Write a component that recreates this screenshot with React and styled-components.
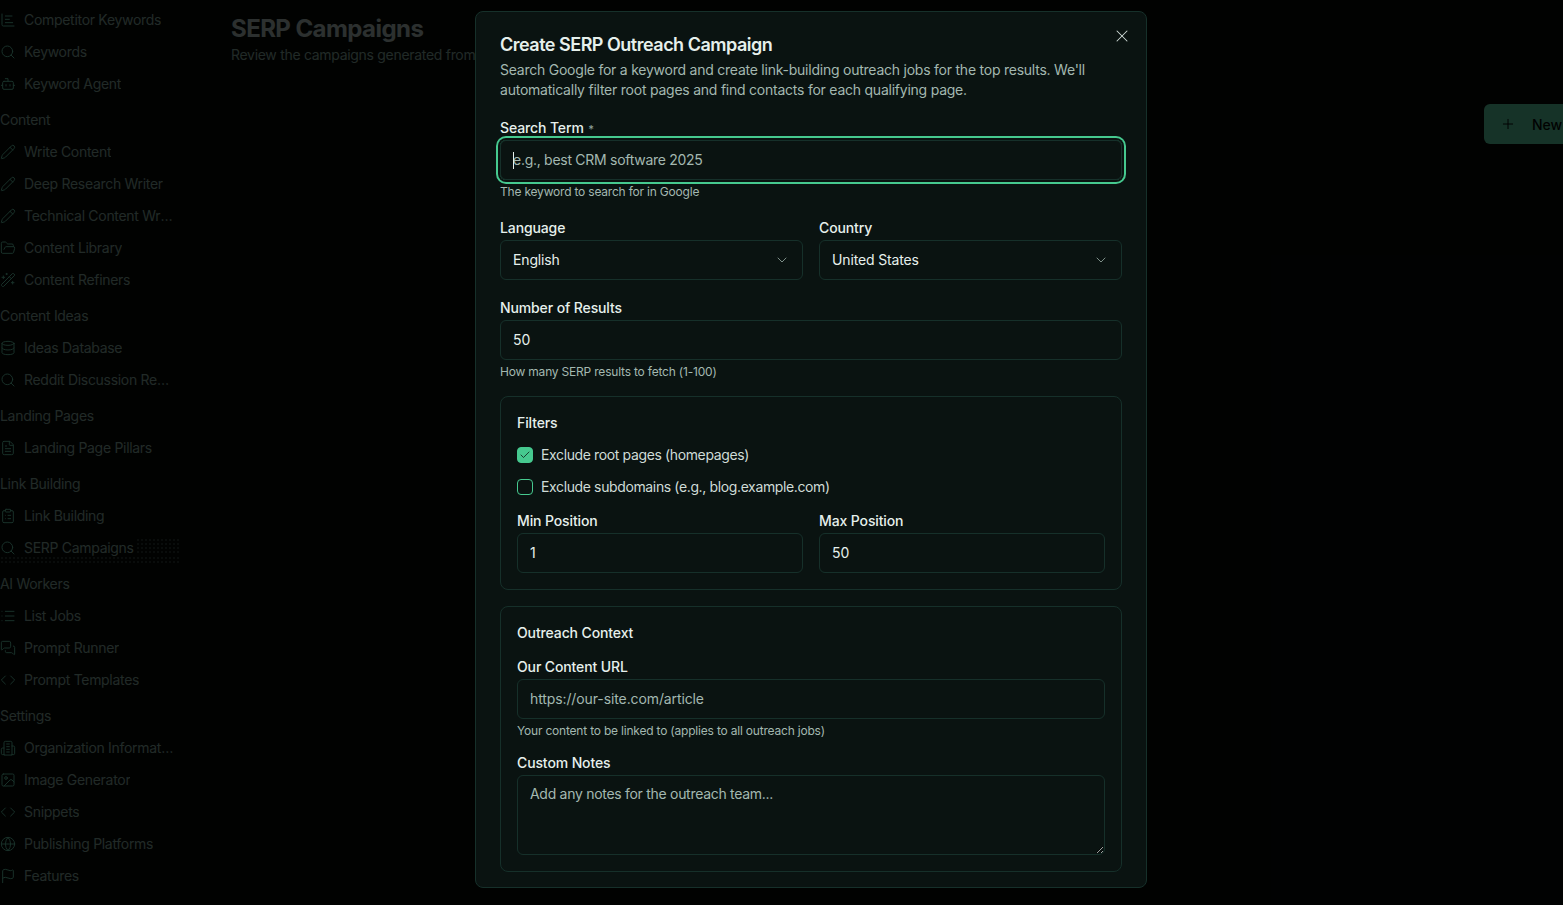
import React from 'react'
import styled, { createGlobalStyle } from 'styled-components'
import {
  Search, Bot, Pencil, FolderOpen, WandSparkles, Database, FileText,
  ClipboardList, List, MessagesSquare, Code, Image, Globe, Flag, Plus, X, ChevronDown, Check,
} from 'lucide-react'

const GlobalStyle = createGlobalStyle`
  html, body { margin: 0; padding: 0; height: 100%; background: #050a09; }
  * { box-sizing: border-box; }
  body { font-family: Inter, "Liberation Sans", sans-serif; overflow: hidden; }
`

const IconBase = ({ children }) => (
  <svg width="16" height="16" viewBox="0 0 24 24" fill="none" stroke="currentColor" strokeWidth="1.5" strokeLinecap="round" strokeLinejoin="round">
    {children}
  </svg>
)

const ChartIcon = () => (
  <IconBase>
    <path d="M3 3v16a2 2 0 0 0 2 2h16" />
    <path d="M8 6h10" />
    <path d="M8 11h6" />
    <path d="M8 16h11" />
  </IconBase>
)

const OrgIcon = () => (
  <IconBase>
    <path d="M6 22V4a2 2 0 0 1 2-2h8a2 2 0 0 1 2 2v18Z" />
    <path d="M6 12H4a2 2 0 0 0-2 2v6a2 2 0 0 0 2 2h2" />
    <path d="M18 9h2a2 2 0 0 1 2 2v9a2 2 0 0 1-2 2h-2" />
    <path d="M10 6h4" />
    <path d="M10 10h4" />
    <path d="M10 14h4" />
    <path d="M10 18h4" />
  </IconBase>
)

const nav = [
  { items: [['Competitor Keywords', ChartIcon], ['Keywords', Search], ['Keyword Agent', Bot]] },
  { title: 'Content', items: [['Write Content', Pencil], ['Deep Research Writer', Pencil], ['Technical Content Writer', Pencil], ['Content Library', FolderOpen], ['Content Refiners', WandSparkles]] },
  { title: 'Content Ideas', items: [['Ideas Database', Database], ['Reddit Discussion Research', Search]] },
  { title: 'Landing Pages', items: [['Landing Page Pillars', FileText]] },
  { title: 'Link Building', items: [['Link Building', ClipboardList], ['SERP Campaigns', Search, true]] },
  { title: 'AI Workers', items: [['List Jobs', List], ['Prompt Runner', MessagesSquare], ['Prompt Templates', Code]] },
  { title: 'Settings', items: [['Organization Information', OrgIcon], ['Image Generator', Image], ['Snippets', Code], ['Publishing Platforms', Globe], ['Features', Flag]] },
]

const App = () => (
  <Page>
    <GlobalStyle />
    <Sidebar>
      {nav.map((group, i) => (
        <NavGroup key={i}>
          {group.title && <GroupTitle>{group.title}</GroupTitle>}
          {group.items.map(([label, Icon, active]) => (
            <NavItem key={label} $active={active}>
              <Icon size={16} strokeWidth={1.5} />
              <span>{label}</span>
            </NavItem>
          ))}
        </NavGroup>
      ))}
    </Sidebar>
    <Main>
      <div>
        <PageTitle>SERP Campaigns</PageTitle>
        <PageSub>Review the campaigns generated from your keyword searches</PageSub>
      </div>
      <NewButton><Plus size={16} strokeWidth={1.5} /> New Campaign</NewButton>
    </Main>
    <Overlay />
    <Dialog>
      <CloseButton><X size={20} strokeWidth={1.25} /></CloseButton>
      <DialogTitle>Create SERP Outreach Campaign</DialogTitle>
      <DialogText>
        Search Google for a keyword and create link-building outreach jobs for the top results. We'll
        automatically filter root pages and find contacts for each qualifying page.
      </DialogText>

      <Field>
        <Label>Search Term <Required>*</Required></Label>
        <InputWrap>
          <Input $focused $tight autoFocus placeholder="e.g., best CRM software 2025" />
          <Caret />
        </InputWrap>
        <Hint>The keyword to search for in Google</Hint>
      </Field>

      <TwoCols>
        <Field>
          <Label>Language</Label>
          <Select>English <ChevronDown size={16} strokeWidth={1.5} /></Select>
        </Field>
        <Field>
          <Label>Country</Label>
          <Select>United States <ChevronDown size={16} strokeWidth={1.5} /></Select>
        </Field>
      </TwoCols>

      <Field>
        <Label>Number of Results</Label>
        <Input defaultValue="50" />
        <Hint>How many SERP results to fetch (1-100)</Hint>
      </Field>

      <Panel>
        <PanelTitle>Filters</PanelTitle>
        <CheckRow>
          <CheckBox $checked><Check size={12} strokeWidth={1.5} /></CheckBox>
          <CheckText>Exclude root pages (homepages)</CheckText>
        </CheckRow>
        <CheckRow>
          <CheckBox />
          <CheckText>Exclude subdomains (e.g., blog.example.com)</CheckText>
        </CheckRow>
        <TwoCols>
          <Field>
            <Label>Min Position</Label>
            <Input defaultValue="1" />
          </Field>
          <Field>
            <Label>Max Position</Label>
            <Input defaultValue="50" />
          </Field>
        </TwoCols>
      </Panel>

      <Panel>
        <PanelTitle>Outreach Context</PanelTitle>
        <Field>
          <Label>Our Content URL</Label>
          <Input placeholder="https://our-site.com/article" />
          <Hint>Your content to be linked to (applies to all outreach jobs)</Hint>
        </Field>
        <Field>
          <Label>Custom Notes</Label>
          <TextArea placeholder="Add any notes for the outreach team..." />
        </Field>
      </Panel>
    </Dialog>
  </Page>
)

const Page = styled.div`
  position: relative;
  display: flex;
  height: 100vh;
  overflow: hidden;
  background: #050a09;
  color: #e6f0ec;
`

const Sidebar = styled.nav`
  flex: 0 0 215px;
  padding-top: 4px;
  display: flex;
  flex-direction: column;
  gap: 4px;
`

const NavGroup = styled.div`
  display: flex;
  flex-direction: column;
`

const GroupTitle = styled.div`
  height: 32px;
  line-height: 32px;
  font-size: 14px;
  letter-spacing: -0.3px;
  color: #a6d0c2;
`

const NavItem = styled.div`
  position: relative;
  height: 32px;
  width: 175.5px;
  display: flex;
  align-items: center;
  gap: 8px;
  font-size: 14px;
  letter-spacing: -0.3px;
  color: #a6d0c2;
  svg { flex: 0 0 16px; color: #7af0c8; }
  span { overflow: hidden; white-space: nowrap; text-overflow: ellipsis; padding-bottom: 1px; }
  ${p => p.$active && `
    &::after, &::before {
      content: '';
      position: absolute;
      background: radial-gradient(circle, #62796f 0.6px, transparent 0.8px) 0 0 / 4px 4px;
    }
    &::after { left: 136px; top: 6px; width: 44px; height: 16px; }
    &::before { left: 0; bottom: 0; width: 180px; height: 8px; }
  `}
`

const Main = styled.main`
  flex: 1;
  min-width: 0;
  padding: 15px 0 0 16px;
  display: flex;
  justify-content: space-between;
  align-items: flex-start;
  white-space: nowrap;
`

const PageTitle = styled.h1`
  margin: 0;
  font-size: 24px;
  line-height: 28px;
  font-weight: 700;
  letter-spacing: -0.57px;
  color: #dcefe8;
`

const PageSub = styled.p`
  margin: 2px 0 0;
  font-size: 14px;
  line-height: 20px;
  letter-spacing: -0.3px;
  color: #a6d0c2;
`

const NewButton = styled.div`
  flex: none;
  width: 160px;
  height: 40px;
  margin: 89px -81px 0 0;
  display: flex;
  align-items: center;
  gap: 16px;
  padding-left: 16px;
  border-radius: 6px;
  background: #70ffc8;
  color: #050a09;
  font-size: 14px;
  font-weight: 500;
`

const Overlay = styled.div`
  position: absolute;
  inset: 0;
  background: rgba(0, 0, 0, 0.8);
`

const Dialog = styled.section`
  position: absolute;
  top: 11px;
  left: 475px;
  width: 672px;
  height: 877px;
  padding: 24px;
  overflow: hidden;
  display: flex;
  flex-direction: column;
  gap: 16px;
  background: #0a1311;
  border: 1px solid #16302a;
  border-radius: 8px;
`

const CloseButton = styled.div`
  position: absolute;
  top: 14px;
  right: 14px;
  display: flex;
  color: #cfdcd7;
`

const DialogTitle = styled.h2`
  margin: 0 0 -10px;
  font-size: 18px;
  line-height: 18px;
  font-weight: 600;
  letter-spacing: -0.5px;
  color: #e6f0ec;
`

const DialogText = styled.p`
  margin: 0;
  font-size: 14px;
  line-height: 20px;
  letter-spacing: -0.235px;
  color: #a3b8b0;
`

const Field = styled.div`
  display: flex;
  flex-direction: column;
  min-width: 0;
  margin-top: 2px;
`

const Label = styled.label`
  height: 20px;
  font-size: 14px;
  line-height: 20px;
  font-weight: 500;
  letter-spacing: -0.12px;
  margin-bottom: 2px;
  color: #e6f0ec;
`

const Required = styled.span`
  margin-left: 1px;
  font-size: 11px;
  line-height: 1;
  color: #8fa39b;
`

const InputWrap = styled.div`
  position: relative;
  display: flex;
`

const Caret = styled.span`
  position: absolute;
  left: 13px;
  top: 12px;
  width: 1px;
  height: 17px;
  background: #e6f0ec;
`

const Input = styled.input`
  width: 100%;
  height: 40px;
  padding: 0 12px 1px;
  font: inherit;
  font-size: 14px;
  letter-spacing: ${p => (p.$tight ? '-0.28px' : '-0.11px')};
  color: #e6f0ec;
  background: transparent;
  border: 1px solid #16302a;
  border-radius: 6px;
  outline: none;
  box-shadow: ${p => (p.$focused ? '0 0 0 2px #0a1311, 0 0 0 4px #46c98f' : 'none')};
  &::placeholder { color: #a3b8b0; opacity: 1; }
`

const Hint = styled.div`
  margin-top: 4px;
  font-size: 12px;
  line-height: 16px;
  letter-spacing: -0.2px;
  color: #a3b8b0;
`

const TwoCols = styled.div`
  display: grid;
  grid-template-columns: 1fr 1fr;
  gap: 16px;
`

const Select = styled.div`
  height: 40px;
  padding: 0 12px 2px;
  display: flex;
  align-items: center;
  justify-content: space-between;
  font-size: 14px;
  letter-spacing: -0.15px;
  color: #e6f0ec;
  border: 1px solid #16302a;
  border-radius: 6px;
  svg { color: #7d8f88; margin-top: 2px; }
`

const Panel = styled.div`
  flex: none;
  padding: 16px;
  display: flex;
  flex-direction: column;
  gap: 12px;
  border: 1px solid #16302a;
  border-radius: 8px;
`

const PanelTitle = styled.div`
  font-size: 14px;
  line-height: 20px;
  font-weight: 500;
  letter-spacing: -0.12px;
  color: #e6f0ec;
`

const CheckRow = styled.div`
  display: flex;
  align-items: center;
  gap: 8px;
  height: 20px;
  font-size: 14px;
  letter-spacing: -0.37px;
  color: #cfdcd7;
`

const CheckText = styled.span`
  padding-bottom: 1px;
`

const CheckBox = styled.span`
  width: 16px;
  height: 16px;
  display: flex;
  align-items: center;
  justify-content: center;
  border: 1px solid #46c98f;
  border-radius: 4px;
  background: ${p => (p.$checked ? '#46c98f' : 'transparent')};
  color: #0a1311;
`

const TextArea = styled.textarea`
  width: 100%;
  height: 80px;
  padding: 8px 12px;
  font: inherit;
  font-size: 14px;
  line-height: 20px;
  letter-spacing: -0.29px;
  color: #e6f0ec;
  background: transparent;
  border: 1px solid #16302a;
  border-radius: 6px;
  outline: none;
  display: block;
  &::placeholder { color: #a3b8b0; opacity: 1; }
`

export default App
